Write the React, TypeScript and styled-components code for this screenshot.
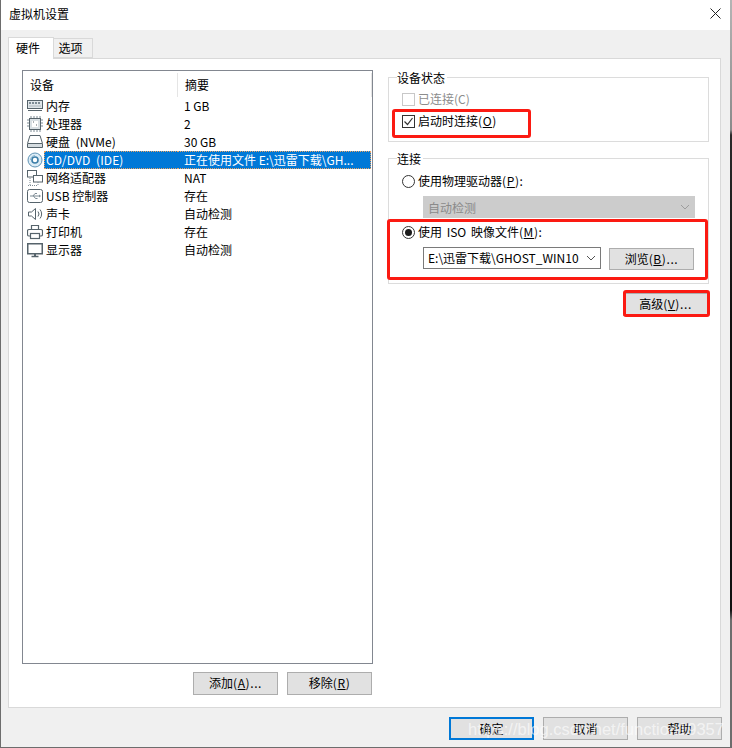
import React from "react";
import styled, { createGlobalStyle } from "styled-components";

const GlobalStyle = createGlobalStyle`
  html, body {
    margin: 0;
    padding: 0;
    background: #fff;
  }
  * {
    box-sizing: border-box;
  }
`;

const Dialog = styled.div`
  position: relative;
  width: 732px;
  height: 748px;
  display: flex;
  flex-direction: column;
  overflow: hidden;
  background: #f0f0f0;
  border-left: 1px solid #6d6d6d;
  border-bottom: 1px solid #6d6d6d;
  font-family: "Noto Sans CJK SC", "Liberation Sans", sans-serif;
  font-size: 12px;
  color: #000;

  &::after {
    content: "";
    position: absolute;
    top: 0;
    right: 0;
    bottom: 0;
    width: 2px;
    background: linear-gradient(
      to bottom,
      #b4b4b4 0,
      #8a8a8a 130px,
      #2a2a2a 135px,
      #111 320px,
      #111 610px,
      #6d6d6d 620px,
      #6d6d6d 100%
    );
  }
`;

const TitleBar = styled.div`
  height: 30px;
  flex: none;
  display: flex;
  align-items: center;
  justify-content: space-between;
  background: #fff;
  padding: 0 11px 3px 8px;
`;

const Title = styled.span`
  font-size: 12px;
`;

const TabRow = styled.div`
  height: 28px;
  flex: none;
  display: flex;
  align-items: flex-end;
  padding: 0 0 0 7px;
`;

const Tab = styled.div<{ $active?: boolean }>`
  display: flex;
  align-items: center;
  justify-content: center;
  width: ${(p) => (p.$active ? "46px" : "39px")};
  height: ${(p) => (p.$active ? "22px" : "20px")};
  margin-bottom: ${(p) => (p.$active ? "-1px" : "0")};
  padding: ${(p) => (p.$active ? "0 6px 3px 0" : "0 5px 2px 0")};
  background: ${(p) => (p.$active ? "#fff" : "#f0f0f0")};
  border: 1px solid #d9d9d9;
  border-left-width: ${(p) => (p.$active ? "1px" : "0")};
  border-bottom-width: ${(p) => (p.$active ? "0" : "1px")};
  position: relative;
  z-index: ${(p) => (p.$active ? 1 : 0)};
`;

const Panel = styled.div`
  width: 713px;
  height: 650px;
  flex: none;
  margin-left: 7px;
  display: flex;
  gap: 15px;
  padding: 11px 11px 0 13px;
  background: #fff;
  border: 1px solid #d9d9d9;
`;

const LeftColumn = styled.div`
  width: 351px;
  flex: none;
  display: flex;
  flex-direction: column;
`;

const DeviceList = styled.div`
  height: 594px;
  flex: none;
  border: 1px solid #828790;
  padding: 1px 0 0;
`;

const HeaderRow = styled.div`
  display: grid;
  grid-template-columns: 155px 1fr;
  height: 25px;
  align-items: center;
`;

const HeaderCell = styled.div`
  height: 24px;
  display: flex;
  align-items: center;
  padding-left: 7px;
  border-right: 1px solid #e5e5e5;
  font-size: 12px;
`;

const Row = styled.div<{ $selected?: boolean }>`
  display: grid;
  grid-template-columns: 21px 134px 1fr;
  height: 18px;
  align-items: center;
  white-space: nowrap;
  color: ${(p) => (p.$selected ? "#fff" : "#000")};
`;

const RowIcon = styled.div`
  display: flex;
  align-items: center;
  padding-left: 4px;
  height: 18px;
`;

const RowName = styled.div<{ $selected?: boolean; $wide?: boolean }>`
  height: 18px;
  line-height: 17px;
  padding-left: 2px;
  word-spacing: ${(p) => (p.$wide ? "3px" : "0")};
  letter-spacing: ${(p) => (p.$selected ? "0.1px" : "0")};
  background: ${(p) => (p.$selected ? "#0078d7" : "transparent")};
  ${(p) =>
    p.$selected &&
    `
    border: 1px dotted #e9a263;
    border-right: 0;
    line-height: 15px;
    padding-left: 1px;
  `}
`;

const RowSummary = styled.div<{ $selected?: boolean }>`
  height: 18px;
  line-height: 17px;
  padding-left: 6px;
  margin-right: 1px;
  background: ${(p) => (p.$selected ? "#0078d7" : "transparent")};
  ${(p) =>
    p.$selected &&
    `
    border: 1px dotted #e9a263;
    border-left: 0;
    line-height: 15px;
  `}
`;

const ListActions = styled.div`
  display: flex;
  justify-content: flex-end;
  gap: 9px;
  margin-top: 8px;
  padding-right: 1px;
`;

const Button = styled.button<{ $h?: number; $mt?: number; $default?: boolean }>`
  width: 85px;
  height: ${(p) => p.$h ?? 23}px;
  margin-top: ${(p) => p.$mt ?? 0}px;
  padding: 0 0 ${(p) => (p.$default !== undefined ? 1 : 2)}px;
  font: inherit;
  color: #000;
  background: #e1e1e1;
  border: ${(p) => (p.$default ? "2px solid #0078d7" : "1px solid #adadad")};
  flex: none;
`;

const Accel = styled.span`
  letter-spacing: 0.6px;
`;

const Key = styled.span`
  text-decoration: underline;
`;

const RightColumn = styled.div`
  width: 321px;
  flex: none;
  display: flex;
  flex-direction: column;
  padding-top: 7px;
`;

const Group = styled.fieldset<{ $h: number }>`
  position: relative;
  height: ${(p) => p.$h}px;
  margin: 0 0 16px;
  padding: 0;
  border: 1px solid #dcdcdc;
`;

const GroupLabel = styled.span`
  position: absolute;
  left: 8px;
  top: -8px;
  padding: 0 2px 0 0;
  background: #fff;
  line-height: 16px;
`;

const OptionRow = styled.div<{ $disabled?: boolean; $mt?: number }>`
  display: flex;
  align-items: center;
  gap: 3px;
  height: 16px;
  margin-left: 13px;
  margin-top: ${(p) => p.$mt ?? 0}px;
  color: ${(p) => (p.$disabled ? "#8c8c8c" : "#000")};
  white-space: nowrap;
`;

const OptionText = styled.span`
  line-height: 16px;
  word-spacing: 2px;
`;

const CheckBox = styled.span<{ $disabled?: boolean }>`
  width: 13px;
  height: 13px;
  flex: none;
  display: flex;
  align-items: center;
  justify-content: center;
  background: #fff;
  border: 1px solid ${(p) => (p.$disabled ? "#c8c8c8" : "#333")};
`;

const Radio = styled.span`
  width: 13px;
  height: 13px;
  flex: none;
  display: flex;
  align-items: center;
  justify-content: center;
  background: #fff;
  border: 1px solid #333;
  border-radius: 50%;
`;

const RadioDot = styled.span`
  width: 7px;
  height: 7px;
  border-radius: 50%;
  background: #1a1a1a;
`;

const Combo = styled.div<{ $disabled?: boolean; $w: number }>`
  width: ${(p) => p.$w}px;
  height: 22px;
  flex: none;
  display: flex;
  align-items: center;
  justify-content: space-between;
  padding: 0 4px ${(p) => (p.$disabled ? 0 : 1)}px;
  white-space: nowrap;
  background: ${(p) => (p.$disabled ? "#cccccc" : "#fff")};
  border: 1px solid ${(p) => (p.$disabled ? "#cccccc" : "#7a7a7a")};
  color: ${(p) => (p.$disabled ? "#8a8a8a" : "#000")};
`;

const ComboRow = styled.div<{ $mt: number }>`
  display: flex;
  align-items: flex-start;
  gap: 8px;
  margin-left: 34px;
  margin-top: ${(p) => p.$mt}px;
`;

const GroupBody = styled.div<{ $pt: number }>`
  padding-top: ${(p) => p.$pt}px;
`;

const AdvancedRow = styled.div`
  display: flex;
  justify-content: flex-end;
  margin-top: -7px;
  margin-right: 1px;
`;

const Footer = styled.div`
  display: flex;
  justify-content: flex-end;
  gap: 9px;
  padding: 9px 10px 0 0;
`;

const Highlight = styled.div<{ $x: number; $y: number; $w: number; $h: number }>`
  position: absolute;
  left: ${(p) => p.$x}px;
  top: ${(p) => p.$y}px;
  width: ${(p) => p.$w}px;
  height: ${(p) => p.$h}px;
  border: 3px solid #fb1a12;
  border-radius: 3px;
  pointer-events: none;
`;

const Watermark = styled.div`
  position: absolute;
  left: 467px;
  top: 720px;
  font-family: "Liberation Sans", sans-serif;
  font-size: 16.5px;
  line-height: 19px;
  color: rgba(255, 255, 255, 0.62);
  white-space: nowrap;
  pointer-events: none;
`;

const Ico = styled.svg`
  display: block;
  flex: none;
`;

const S = "#56636b";

const icons: Record<string, React.ReactNode> = {
  memory: (
    <>
      <rect x="0.5" y="2.5" width="15" height="8" fill="#dfe5e9" stroke={S} />
      <path d="M2 5h12" stroke="#7d8b94" strokeWidth="2" strokeDasharray="2 1" />
      <path d="M2 8h12" stroke="#aab4ba" />
      <path d="M1 12.5h14" stroke={S} />
    </>
  ),
  cpu: (
    <>
      <rect x="2.5" y="2.5" width="11" height="11" fill="#d9e0e4" stroke={S} />
      <rect x="5" y="5" width="6" height="6" fill="#fff" />
      <path d="M6 6h1M9 9h1" stroke={S} />
      <path d="M4 0v2M7 0v2M10 0v2M13 0v2M4 14v2M7 14v2M10 14v2M13 14v2M0 4h2M0 7h2M0 10h2M14 4h2M14 7h2M14 10h2" stroke="#7d8b94" />
    </>
  ),
  disk: (
    <>
      <path d="M3 1.5h10l2.5 8v4h-15v-4z" fill="#fff" stroke={S} />
      <path d="M1 9.5h14" stroke={S} />
      <rect x="1" y="10" width="14" height="3" fill="#d5dce0" />
    </>
  ),
  cd: (
    <>
      <circle cx="8" cy="8" r="7" fill="#dcecf6" stroke="#5f93b5" />
      <circle cx="8" cy="8" r="3" fill="#fff" stroke="#3c7ea8" strokeWidth="1.6" />
      <path d="M3.5 8a4.5 4.5 0 0 1 4.5-4.5" fill="none" stroke="#8fb8d1" />
    </>
  ),
  network: (
    <>
      <rect x="0.5" y="0.5" width="9" height="6.5" fill="#fff" stroke={S} />
      <rect x="6.5" y="5.5" width="9" height="6.5" fill="#fff" stroke={S} />
      <path d="M1 15.5h10M11 12v3M3 8v7" stroke="#7d8b94" strokeDasharray="1 1" />
    </>
  ),
  usb: (
    <>
      <rect x="0.5" y="1.5" width="15" height="13" rx="2" fill="#fff" stroke={S} />
      <path d="M3 8h9M6 8l2-2.5h2M6.5 8l2 2.5h2" fill="none" stroke="#7d8b94" />
      <path d="M12 6.5l2 1.5-2 1.5z" fill="#7d8b94" />
    </>
  ),
  sound: (
    <>
      <path d="M1.5 6h3l4-3.5v11l-4-3.5h-3z" fill="#fff" stroke={S} />
      <path d="M11 5.5a4 4 0 0 1 0 5M13 3.5a7 7 0 0 1 0 9" fill="none" stroke={S} />
    </>
  ),
  printer: (
    <>
      <path d="M4.5 6V1.5h7V6" fill="#fff" stroke={S} strokeWidth="1.2" />
      <rect x="0.5" y="5.5" width="15" height="6.5" rx="1.5" fill="#fff" stroke={S} strokeWidth="1.2" />
      <rect x="3.5" y="9.5" width="9" height="5" fill="#fff" stroke={S} strokeWidth="1.2" />
    </>
  ),
  display: (
    <>
      <rect x="0.75" y="1.75" width="14.5" height="10" fill="#fff" stroke={S} strokeWidth="1.5" />
      <path d="M4.5 14.5h7" stroke={S} strokeWidth="1.5" />
      <path d="M8 12v2" stroke={S} strokeWidth="2" />
    </>
  ),
};

const DeviceIcon = ({ name }: { name: string }) => (
  <Ico width="16" height="16" viewBox="0 0 16 16">
    {icons[name]}
  </Ico>
);

const Chevron = ({ color }: { color: string }) => (
  <Ico width="10" height="6" viewBox="0 0 10 6">
    <path d="M1 1l4 4 4-4" fill="none" stroke={color} />
  </Ico>
);

const devices = [
  { icon: "memory", name: "内存", summary: "1 GB" },
  { icon: "cpu", name: "处理器", summary: "2" },
  { icon: "disk", name: "硬盘 (NVMe)", summary: "30 GB", wide: true },
  { icon: "cd", name: "CD/DVD (IDE)", summary: "正在使用文件 E:\\迅雷下载\\GH...", selected: true, wide: true },
  { icon: "network", name: "网络适配器", summary: "NAT" },
  { icon: "usb", name: "USB 控制器", summary: "存在" },
  { icon: "sound", name: "声卡", summary: "自动检测" },
  { icon: "printer", name: "打印机", summary: "存在" },
  { icon: "display", name: "显示器", summary: "自动检测" },
];

export default function App() {
  return (
    <Dialog>
      <GlobalStyle />
      <TitleBar>
        <Title>虚拟机设置</Title>
        <Ico width="11" height="11" viewBox="0 0 11 11">
          <path d="M0.5 0.5l10 10M10.5 0.5l-10 10" stroke="#222" strokeWidth="1" />
        </Ico>
      </TitleBar>
      <TabRow>
        <Tab $active>硬件</Tab>
        <Tab>选项</Tab>
      </TabRow>
      <Panel>
        <LeftColumn>
          <DeviceList>
            <HeaderRow>
              <HeaderCell>设备</HeaderCell>
              <HeaderCell>摘要</HeaderCell>
            </HeaderRow>
            {devices.map((d) => (
              <Row key={d.icon} $selected={d.selected}>
                <RowIcon>
                  <DeviceIcon name={d.icon} />
                </RowIcon>
                <RowName $selected={d.selected} $wide={d.wide}>
                  {d.name}
                </RowName>
                <RowSummary $selected={d.selected}>{d.summary}</RowSummary>
              </Row>
            ))}
          </DeviceList>
          <ListActions>
            <Button>
              添加<Accel>(<Key>A</Key>)...</Accel>
            </Button>
            <Button>
              移除<Accel>(<Key>R</Key>)</Accel>
            </Button>
          </ListActions>
        </LeftColumn>
        <RightColumn>
          <Group $h={65}>
            <GroupLabel>设备状态</GroupLabel>
            <GroupBody $pt={13}>
              <OptionRow $disabled>
                <CheckBox $disabled />
                <OptionText>已连接(C)</OptionText>
              </OptionRow>
              <OptionRow $mt={6}>
                <CheckBox>
                  <Ico width="11" height="11" viewBox="0 0 11 11">
                    <path d="M1.5 5.5l3 3 5-6.5" fill="none" stroke="#333" strokeWidth="1.2" />
                  </Ico>
                </CheckBox>
                <OptionText>
                  启动时连接<Accel>(<Key>O</Key>)</Accel>
                </OptionText>
              </OptionRow>
            </GroupBody>
          </Group>
          <Group $h={126}>
            <GroupLabel>连接</GroupLabel>
            <GroupBody $pt={14}>
              <OptionRow>
                <Radio />
                <OptionText>
                  使用物理驱动器<Accel>(<Key>P</Key>):</Accel>
                </OptionText>
              </OptionRow>
              <ComboRow $mt={7}>
                <Combo $disabled $w={272}>
                  自动检测
                  <Chevron color="#9c9c9c" />
                </Combo>
              </ComboRow>
              <OptionRow $mt={6}>
                <Radio>
                  <RadioDot />
                </Radio>
                <OptionText>
                  使用 ISO 映像文件<Accel>(<Key>M</Key>):</Accel>
                </OptionText>
              </OptionRow>
              <ComboRow $mt={7}>
                <Combo $w={178}>
                  E:\迅雷下载\GHOST_WIN10
                  <Chevron color="#555" />
                </Combo>
                <Button $h={22} $mt={1}>
                  浏览<Accel>(<Key>B</Key>)...</Accel>
                </Button>
              </ComboRow>
            </GroupBody>
          </Group>
          <AdvancedRow>
            <Button>
              高级<Accel>(<Key>V</Key>)...</Accel>
            </Button>
          </AdvancedRow>
        </RightColumn>
      </Panel>
      <Footer>
        <Button $default>确定</Button>
        <Button $default={false}>取消</Button>
        <Button $default={false}>帮助</Button>
      </Footer>
      <Highlight $x={391} $y={109} $w={139} $h={29} />
      <Highlight $x={386} $y={219} $w={321} $h={61} />
      <Highlight $x={622} $y={290} $w={87} $h={27} />
      <Watermark>https://blog.csdn.net/function19357</Watermark>
    </Dialog>
  );
}
